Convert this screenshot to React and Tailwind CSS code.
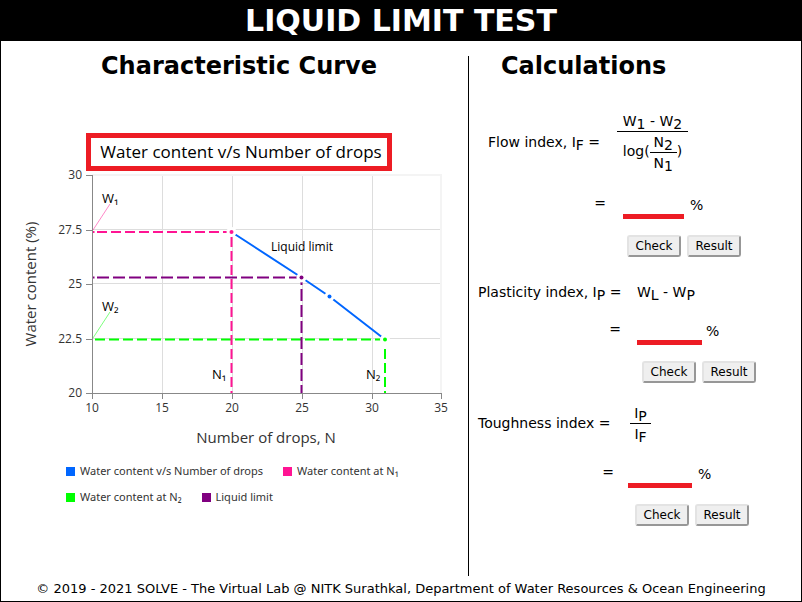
const series = [
  { name: 'Water content v/s Number of drops', swatch: 'bg-[#0066ff]' },
  { name: 'Water content at N₁', swatch: 'bg-[#ff1493]' },
  { name: 'Water content at N₂', swatch: 'bg-[#00ff00]' },
  { name: 'Liquid limit', swatch: 'bg-[#800080]' },
];

const xTicks = [
  [92, '10'],
  [162, '15'],
  [232, '20'],
  [302, '25'],
  [372, '30'],
  [441, '35'],
];

const yTicks = [
  [175, '30'],
  [230, '27.5'],
  [284, '25'],
  [339, '22.5'],
  [393, '20'],
];

const points = [
  [231.5, 232, '#ff1493'],
  [301.5, 277.5, '#800080'],
  [329.5, 296.5, '#0066ff'],
  [385, 339.5, '#00ff00'],
];

function Chart() {
  return (
    <svg
      viewBox="20 171 430 280"
      width="430"
      height="280"
      className="block max-w-full overflow-visible"
      role="img"
      aria-label="Water content against number of drops"
    >
      <g stroke="#dddddd" shapeRendering="crispEdges">
        {xTicks.slice(1, 5).map(([x]) => (
          <line key={x} x1={x + 0.5} x2={x + 0.5} y1="175" y2="393" />
        ))}
        {yTicks.slice(1, 4).map(([y]) => (
          <line key={y} x1="92" x2="441" y1={y - 0.5} y2={y - 0.5} />
        ))}
      </g>
      <path d="M92 175H441V393" fill="none" stroke="#f4f4f4" strokeWidth="2" />
      <g stroke="#888888" fill="none" shapeRendering="crispEdges">
        <path d="M92.5 175V393.5H441.5" />
        {xTicks.map(([x]) => (
          <line key={x} x1={x + 0.5} x2={x + 0.5} y1="393" y2="399" />
        ))}
        {yTicks.map(([y]) => (
          <line key={y} x1="86" x2="92" y1={y + 0.5} y2={y + 0.5} />
        ))}
      </g>

      <polyline
        points={points.map(([x, y]) => `${x},${y}`).join(' ')}
        fill="none"
        stroke="#0066ff"
        strokeWidth="2"
      />
      <g fill="none" stroke="#00ff00" strokeWidth="2" strokeDasharray="10 4">
        <path d="M95 339.5H385" />
        <path d="M385 349V393" />
      </g>
      <g fill="none" stroke="#800080" strokeWidth="2" strokeDasharray="12 4">
        <path d="M97 277.5H301" />
        <path d="M301.5 273V393" />
      </g>
      <g fill="none" stroke="#ff1493" strokeWidth="2" strokeDasharray="10 4">
        <path d="M97 232H231" />
        <path d="M231.5 237V393" />
      </g>
      <path d="M93 232h1.5" stroke="#ff1493" strokeWidth="2" />
      <path d="M93 277.5h1.5" stroke="#800080" strokeWidth="2" />
      {points.map(([x, y, color]) => (
        <g key={color}>
          <circle cx={x} cy={y} r="5" fill="#ffffff" />
          <circle cx={x} cy={y} r="2" fill={color} />
        </g>
      ))}
      <path d="M93 230L110 204" stroke="#ff1493" strokeWidth="1" opacity="0.5" />
      <path d="M93 338L110 312" stroke="#00ff00" strokeWidth="1" opacity="0.5" />

      <g fontSize="12" fill="#333333">
        {yTicks.map(([y, label]) => (
          <text key={label} x="82" y={y + 4} textAnchor="end">{label}</text>
        ))}
        {xTicks.map(([x, label]) => (
          <text key={label} x={x} y="412" textAnchor="middle">{label}</text>
        ))}
      </g>
      <g fontSize="13" fill="#000000">
        <text x="102" y="203">W₁</text>
        <text x="102" y="311">W₂</text>
        <text x="212" y="379">N₁</text>
        <text x="366" y="379">N₂</text>
      </g>
      <text x="271" y="251" fontSize="12">Liquid limit</text>
      <g fontSize="15" fill="#333333" textAnchor="middle">
        <text x="266" y="443">Number of drops, N</text>
        <text transform="translate(36 284) rotate(-90)">Water content (%)</text>
      </g>
    </svg>
  );
}

function Sub({ base, children }) {
  return (
    <span>
      {base}
      <span className="relative top-[3px]">{children}</span>
    </span>
  );
}

function Fraction({ top, bottom, className }) {
  return (
    <span className={`inline-flex flex-col items-center ${className}`}>
      <span className="w-full border-b border-black text-center">{top}</span>
      <span>{bottom}</span>
    </span>
  );
}

function Calculation({ id, name, label, formula, className, labelClass, rowClass, fieldClass, actionsClass }) {
  return (
    <form className={className} onSubmit={(e) => e.preventDefault()}>
      <div className="grid grid-cols-[auto_1fr]">
        <label htmlFor={id} className={`flex items-center whitespace-pre ${rowClass} ${labelClass}`}>{label}</label>
        <div className={`flex items-center ${rowClass}`}>{formula}</div>
        <span className="flex h-8 items-center justify-end">=</span>
        <div className="flex h-8 items-center">
          <input
            id={id}
            aria-label={name}
            type="text"
            className={`h-8 border-b-5 border-[#ed1c24] bg-transparent outline-none ${fieldClass}`}
          />
          <span className="pt-1">%</span>
        </div>
      </div>
      <div className={`mt-4 flex gap-[6px] ${actionsClass}`}>
        <Action>Check</Action>
        <Action>Result</Action>
      </div>
    </form>
  );
}

function Action({ children }) {
  return (
    <button
      type="button"
      className="h-[22px] w-[54px] rounded-[3px] border-2 border-t-[#e3e3e3] border-r-[#979797] border-b-[#979797] border-l-[#e3e3e3] bg-[#efefef] text-xs leading-[18px]"
    >
      {children}
    </button>
  );
}

export default function App() {
  return (
    <div className="flex min-h-screen flex-col border border-black bg-white font-['DejaVu_Sans',Verdana,sans-serif] text-black">
      <header className="bg-black text-center">
        <h1 className="text-3xl leading-10 font-bold text-white">LIQUID LIMIT TEST</h1>
      </header>
      <main className="mt-[15px] grid grid-cols-[467fr_333fr]">
        <section className="pl-[19px]">
          <h2 className="pl-[81px] text-2xl leading-5 font-bold">Characteristic Curve</h2>
          <div className="mt-[57px] font-['Open_Sans','Noto_Sans',sans-serif]">
            <h3 className="ml-[66px] h-[38px] w-[306px] border-5 border-[#ed1c24] pl-1 text-center text-[17px] leading-7 whitespace-nowrap">
              Water content v/s Number of drops
            </h3>
            <Chart />
            <ul className="ml-[46px] flex w-[360px] flex-wrap gap-x-5 gap-y-[6px] pt-[10px] font-['Noto_Sans',sans-serif] text-[11px] leading-5 text-[#333]">
              {series.map((s) => (
                <li key={s.name} className="flex items-center gap-[5px] whitespace-nowrap">
                  <span className={`size-[9px] ${s.swatch}`} />
                  {s.name}
                </li>
              ))}
            </ul>
          </div>
        </section>
        <section className="h-[520px] border-l border-black text-sm leading-5">
          <h2 className="pl-8 text-2xl leading-5 font-bold">Calculations</h2>
          <Calculation
            id="flow"
            name="Flow index"
            label={<>Flow index, <Sub base="I">F</Sub> =</>}
            className="mt-[21px] pl-[19px]"
            labelClass="w-[118px]"
            rowClass="h-[90px]"
            fieldClass="ml-[17px] mr-[6px] w-[61px]"
            actionsClass="pl-[139px]"
            formula={
              <Fraction
                className="ml-[11px] w-[71px]"
                top={<><Sub base="W">1</Sub> - <Sub base="W">2</Sub></>}
                bottom={
                  <span className="flex items-center">
                    <span className="pb-1">log(</span>
                    <Fraction
                      className="w-[27px]"
                      top={<Sub base="N">2</Sub>}
                      bottom={<Sub base="N">1</Sub>}
                    />
                    <span className="pb-1">)</span>
                  </span>
                }
              />
            }
          />
          <Calculation
            id="plasticity"
            name="Plasticity index"
            label={<>Plasticity index, <Sub base="I">P</Sub> =</>}
            className="mt-[14px] pl-[9px]"
            labelClass="w-[143px]"
            rowClass="h-[42px]"
            fieldClass="ml-4 mr-1 w-[65px]"
            actionsClass="pl-[164px]"
            formula={<span className="ml-4"><Sub base="W">L</Sub> - <Sub base="W">P</Sub></span>}
          />
          <Calculation
            id="toughness"
            name="Toughness index"
            label="Toughness index ="
            className="mt-[7px] pl-[9px]"
            labelClass="w-[136px]"
            rowClass="h-[66px]"
            fieldClass="ml-[14px] mr-[6px] w-[64px]"
            actionsClass="pl-[157px]"
            formula={
              <Fraction
                className="ml-4 w-[21px]"
                top={<Sub base="I">P</Sub>}
                bottom={<Sub base="I">F</Sub>}
              />
            }
          />
        </section>
      </main>
      <footer className="pt-[3px] text-center text-[13px] leading-5">
        © 2019 - 2021 SOLVE - The Virtual Lab @ NITK Surathkal, Department of Water Resources &amp; Ocean Engineering
      </footer>
    </div>
  );
}
